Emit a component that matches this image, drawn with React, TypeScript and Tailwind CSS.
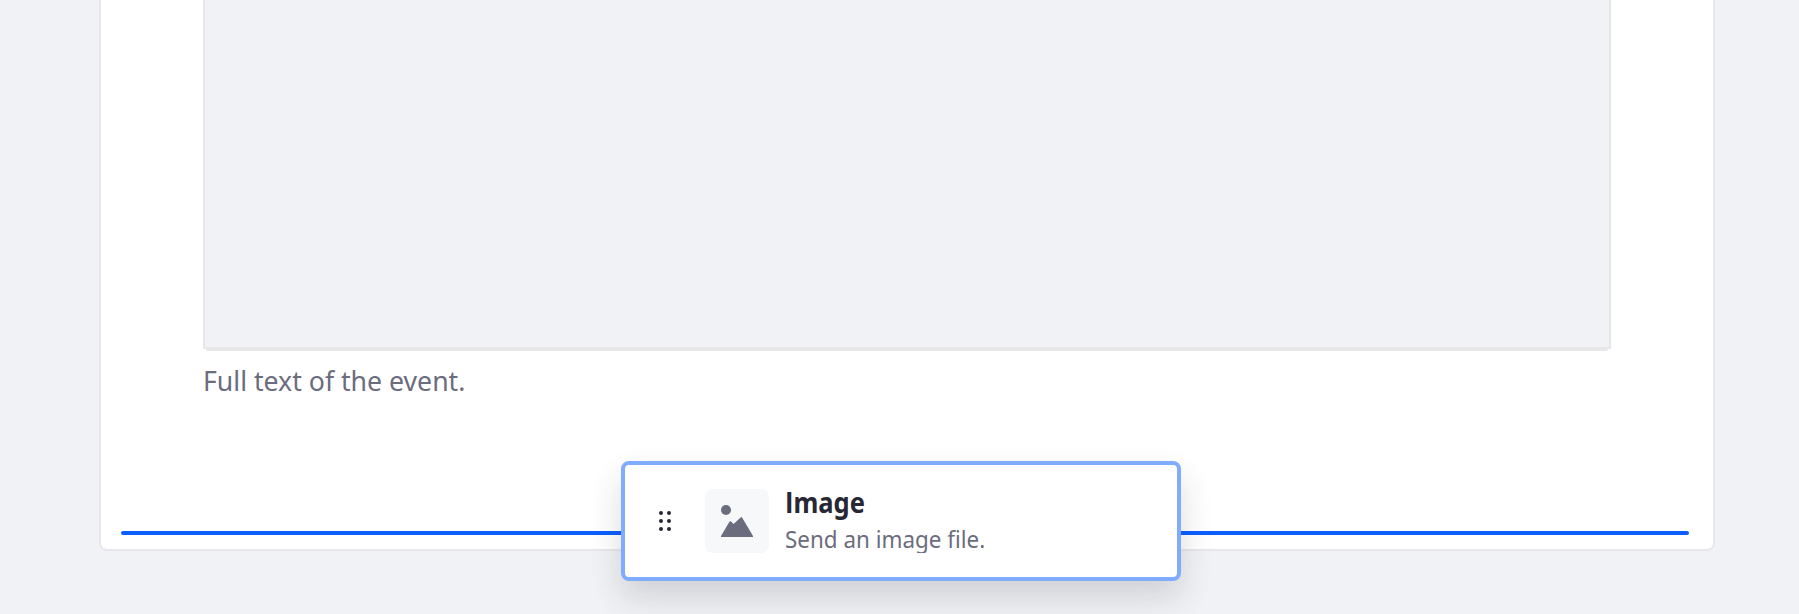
function DragHandle() {
  return (
    <svg className="ml-[34px] h-5 w-3 shrink-0" viewBox="0 0 12 20" fill="#272833">
      {[2, 10].map((x) => [2, 10, 18].map((y) => <circle key={`${x}-${y}`} cx={x} cy={y} r="2" />))}
    </svg>
  );
}

function ImageIcon() {
  return (
    <svg className="h-8 w-8" viewBox="0 0 32 32" fill="#6b6c7e">
      <circle cx="5" cy="5" r="5" />
      <path d="M0 31 8.600 16.600Q9.200 15.800 10 16.400L12.600 19 19.600 12.400Q20.600 11.700 21.200 12.700L32 31V32H0Z" />
    </svg>
  );
}

function DraggedField() {
  return (
    <div className="absolute top-[461px] left-[621px] flex h-[120px] w-[560px] items-center rounded-lg border-4 border-[#80acff] bg-white shadow-[0_16px_32px_rgba(39,40,51,0.16)]">
      <DragHandle />
      <div className="ml-[34px] flex h-16 w-16 shrink-0 items-center justify-center rounded-lg bg-[#f7f8f9]">
        <ImageIcon />
      </div>
      <div className="ml-4 flex h-16 flex-col whitespace-nowrap">
        <div className="h-8 origin-left scale-x-[0.91] text-[28px] leading-[26px] font-bold text-[#272833]">
          <span className="font-['Open_Sans',sans-serif]">I</span>mage
        </div>
        <div className="h-8 origin-left scale-x-[0.934] overflow-hidden text-[24px] leading-[36px] font-[370] text-[#6b6c7e]">
          Send an image file.
        </div>
      </div>
    </div>
  );
}

export default function App() {
  return (
    <div className="relative h-[614px] w-[1799px] overflow-hidden bg-[#f1f2f5] font-['Noto_Sans',sans-serif]">
      <main className="ml-[99px] flex h-[551px] w-[1616px] flex-col rounded-b-lg border-2 border-t-0 border-[#e7e7ed] bg-white">
        <div className="ml-[102px] flex w-[1408px] flex-col">
          <div className="h-[349px] border-2 border-t-0 border-[#e7e7e9] bg-[#f1f2f5]" />
          <div className="mx-[3px] h-0.5 rounded-b-xs bg-[#e7e7e9]" />
          <p className="mt-2 origin-left scale-x-[0.952] text-[28px] leading-[42px] font-[370] whitespace-nowrap text-[#6b6c7e]">
            Full text of the event.
          </p>
        </div>
        <div className="mt-auto mb-[14px] ml-5 h-1 w-[1568px] rounded-sm bg-[#0b5fff]" />
      </main>
      <DraggedField />
    </div>
  );
}
